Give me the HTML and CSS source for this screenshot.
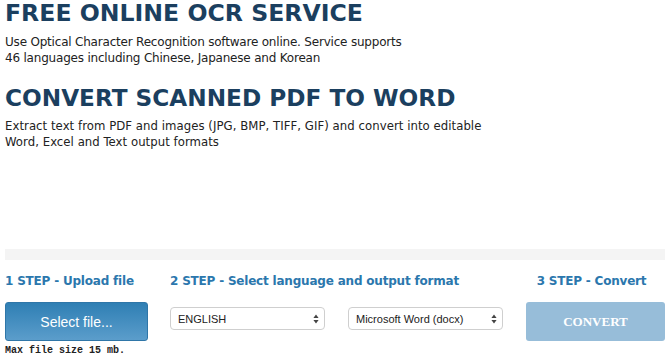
FILE: index.html
```html
<!DOCTYPE html>
<html>
<head>
<meta charset="utf-8">
<link rel="stylesheet" href="styles.css">
</head>
<body>
<div class="page">
  <h1 class="title">FREE ONLINE OCR SERVICE</h1>
  <p class="lead">Use Optical Character Recognition software online. Service supports<br>46 languages including Chinese, Japanese and Korean</p>
  <h2 class="title title-2">CONVERT SCANNED PDF TO WORD</h2>
  <p class="lead lead-2">Extract text from PDF and images (JPG, BMP, TIFF, GIF) and convert into editable<br>Word, Excel and Text output formats</p>
  <div class="band"></div>
  <div class="steps">
    <div class="step step-1">
      <h3 class="step-title">1 STEP - Upload file</h3>
      <button class="btn-select">Select file...</button>
      <div class="note">Max file size 15 mb.</div>
    </div>
    <div class="step step-2">
      <h3 class="step-title">2 STEP - Select language and output format</h3>
      <div class="selects">
        <div class="select"><span>ENGLISH</span><svg class="arrows" width="6" height="10" viewBox="0 0 6 10"><path d="M3 0.5 L5.6 4 H0.4 Z M3 9.5 L5.6 6 H0.4 Z" fill="#444"/></svg></div>
        <div class="select"><span>Microsoft Word (docx)</span><svg class="arrows" width="6" height="10" viewBox="0 0 6 10"><path d="M3 0.5 L5.6 4 H0.4 Z M3 9.5 L5.6 6 H0.4 Z" fill="#444"/></svg></div>
      </div>
    </div>
    <div class="step step-3">
      <h3 class="step-title">3 STEP - Convert</h3>
      <button class="btn-convert">CONVERT</button>
    </div>
  </div>
</div>
</body>
</html>
```

FILE: styles.css
```css
html, body {
  margin: 0;
  padding: 0;
  background: #ffffff;
}
.page {
  padding: 0 5px;
  font-family: "DejaVu Sans", Verdana, sans-serif;
  color: #222;
}
.title {
  margin: 0;
  font-size: 23.6px;
  line-height: 26px;
  font-weight: bold;
  color: #1b3f5f;
}
.title-2 {
  margin-top: 19px;
  font-size: 23.2px;
}
.lead {
  margin: 8px 0 0;
  font-size: 12px;
  line-height: 16px;
  letter-spacing: -0.2px;
  color: #222;
}
.lead-2 {
  margin-top: 7px;
  font-family: "DejaVu Sans Condensed", Tahoma, sans-serif;
  font-size: 13px;
  letter-spacing: 0.05px;
}
.band {
  height: 11px;
  background: #f4f4f4;
  margin-top: 99px;
}
.steps {
  display: grid;
  grid-template-columns: 165px 356px 139px;
  margin-top: 13px;
}
.step-title {
  margin: 0;
  font-size: 12px;
  line-height: 16px;
  font-weight: bold;
  letter-spacing: -0.2px;
  color: #2b77ad;
  white-space: nowrap;
}
.step-3 .step-title {
  text-align: center;
  padding-right: 8px;
}
.btn-select {
  display: block;
  margin-top: 13px;
  width: 143px;
  height: 39px;
  border: 1px solid #2f76a8;
  border-radius: 3px;
  background: linear-gradient(#2f7fb4, #5b9dcb);
  color: #fff;
  font-family: "Liberation Sans", Helvetica, Arial, sans-serif;
  font-size: 14px;
  padding: 0;
}
.note {
  margin-top: 4px;
  font-family: "Liberation Mono", "Courier New", monospace;
  font-size: 10px;
  line-height: 12px;
  font-weight: bold;
  color: #222;
}
.selects {
  display: flex;
  gap: 23px;
  margin-top: 18px;
}
.select {
  box-sizing: border-box;
  width: 155px;
  height: 23px;
  border: 1px solid #cfcfcf;
  border-radius: 4px;
  background: #fff;
  display: flex;
  align-items: center;
  justify-content: space-between;
  padding: 0 5px 0 7px;
  font-family: "Liberation Sans", Helvetica, Arial, sans-serif;
  font-size: 11px;
  color: #222;
}
.btn-convert {
  display: block;
  margin-top: 13px;
  width: 139px;
  height: 39px;
  border: none;
  border-radius: 3px;
  background: #97bdd9;
  color: #fff;
  font-family: "Liberation Serif", "Times New Roman", serif;
  font-size: 13px;
  font-weight: bold;
  padding: 0;
}
```
